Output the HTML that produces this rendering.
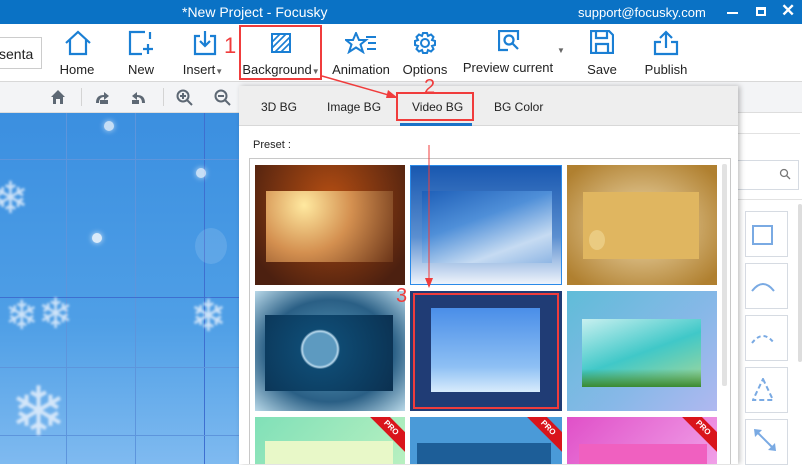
<!DOCTYPE html>
<html><head><style>
*{margin:0;padding:0;box-sizing:border-box}
body{width:802px;height:464px;overflow:hidden;position:relative;font-family:"Liberation Sans",sans-serif;background:#fff}
.a{position:absolute}
.lbl{position:absolute;top:62px;font-size:13px;color:#222;white-space:nowrap;transform:translateX(-50%)}
.ico{position:absolute;top:30px}
.t{position:absolute;font-size:12px;color:#222}
.th{position:absolute;overflow:hidden}
.in{position:absolute}
.pro{position:absolute;right:-14px;top:4px;width:56px;height:14px;background:#d9141b;color:#fff;font-size:8px;font-weight:bold;text-align:center;line-height:14px;transform:rotate(45deg)}
.sb{position:absolute;left:745px;width:43px;height:46px;border:1px solid #d6dbe2;background:#fff}
.sf{position:absolute;filter:blur(1.2px);opacity:.85}
</style></head><body>
<div class="a" style="left:0;top:0;width:802px;height:24px;background:#0a72c5"></div>
<div class="a" style="left:182px;top:4px;color:#fff;font-size:14px">*New Project - Focusky</div>
<div class="a" style="left:578px;top:5px;color:#fff;font-size:13px">support@focusky.com</div>
<div class="a" style="left:727px;top:12px;width:11px;height:2px;background:#fff"></div>
<div class="a" style="left:756px;top:7px;width:10px;height:9px;border:2px solid #fff;border-top-width:3px"></div>
<div class="a" style="left:781px;top:1px;color:#fff;font-size:17px;font-weight:bold">✕</div>
<div class="a" style="left:0;top:24px;width:802px;height:58px;background:#fff;border-bottom:1px solid #d8d8d8"></div>
<div class="a" style="left:-2px;top:37px;width:44px;height:32px;border:1px solid #ccc;font-size:14px;padding:8px 0 0 0;color:#222">senta</div>
<svg class="ico" style="left:64px" width="28" height="26" viewBox="0 0 28 26" fill="none" stroke="#1a7fd4" stroke-width="2.2"><path d="M2 13 L14 2 L26 13 M6 10 V24 H22 V10"/></svg>
<div class="lbl" style="left:77px">Home</div>
<svg class="ico" style="left:128px" width="26" height="26" viewBox="0 0 26 26" fill="none" stroke="#1a7fd4" stroke-width="2.2"><path d="M17 2 H2 V24 H14 M20 14 V24 M15 19 H25 M22 2 V9"/></svg>
<div class="lbl" style="left:141px">New</div>
<svg class="ico" style="left:193px" width="24" height="26" viewBox="0 0 24 26" fill="none" stroke="#1a7fd4" stroke-width="2.2"><path d="M7 6 H2 V24 H22 V6 H17 M12 1 V16 M7 11 L12 16 L17 11"/></svg>
<div class="lbl" style="left:203px">Insert<span style="font-size:8px;color:#666">▼</span></div>
<svg class="ico" style="left:271px;top:33px" width="20" height="20" viewBox="0 0 20 20"><rect x="1" y="1" width="18" height="18" fill="none" stroke="#1a7fd4" stroke-width="2"/><path d="M1 9 L9 1 M1 15 L15 1 M4 19 L19 4 M10 19 L19 10" stroke="#1a7fd4" stroke-width="1.6"/></svg>
<div class="lbl" style="left:281px">Background<span style="font-size:8px;color:#666">▼</span></div>
<svg class="ico" style="left:345px;top:32px" width="32" height="22" viewBox="0 0 32 22" fill="none" stroke="#1a7fd4" stroke-width="2"><path d="M11 1 L14 8 L21 8 L15.5 12.5 L18 20 L11 15.5 L4 20 L6.5 12.5 L1 8 L8 8 Z M21 5 H31 M23 11 H31 M22 17 H31"/></svg>
<div class="lbl" style="left:361px">Animation</div>
<svg class="ico" style="left:413px;top:31px" width="24" height="24" viewBox="0 0 24 24" fill="none" stroke="#1a7fd4" stroke-width="2"><circle cx="12" cy="12" r="4"/><path d="M10 2h4l1 3 3-1.5 2.5 2.5-1.5 3 3 1v4l-3 1 1.5 3-2.5 2.5-3-1.5-1 3h-4l-1-3-3 1.5-2.5-2.5 1.5-3-3-1v-4l3-1-1.5-3 2.5-2.5 3 1.5z"/></svg>
<div class="lbl" style="left:425px">Options</div>
<svg class="ico" style="left:498px" width="22" height="22" viewBox="0 0 22 22" fill="none" stroke="#1a7fd4" stroke-width="2.2"><path d="M20 10 V1 H1 V20 H10"/><circle cx="11" cy="10" r="4.5"/><path d="M14 13 L20 19"/></svg>
<div class="lbl" style="left:508px;top:60px">Preview current</div>
<div class="a" style="left:557px;top:46px;font-size:8px;color:#666">▼</div>
<svg class="ico" style="left:590px" width="24" height="24" viewBox="0 0 24 24" fill="none" stroke="#1a7fd4" stroke-width="2.2"><path d="M1 1 H19 L23 5 V23 H1 Z M6 1 V8 H17 V1 M6 23 V14 H18 V23"/></svg>
<div class="lbl" style="left:602px">Save</div>
<svg class="ico" style="left:653px" width="26" height="26" viewBox="0 0 26 26" fill="none" stroke="#1a7fd4" stroke-width="2.2"><path d="M8 12 H2 V24 H24 V12 H18 M13 2 V18 M7 8 L13 2 L19 8"/></svg>
<div class="lbl" style="left:666px">Publish</div>
<div class="a" style="left:0;top:82px;width:802px;height:31px;background:#f3f4f6;border-bottom:1px solid #ddd"></div>
<svg class="a" style="left:50px;top:89px" width="16" height="16" viewBox="0 0 16 16"><path d="M1 8 L8 1 L15 8 H13 V15 H10 V10 H6 V15 H3 V8 Z" fill="#5d6874"/></svg>
<div class="a" style="left:81px;top:88px;width:1px;height:18px;background:#d4d4d4"></div>
<svg class="a" style="left:94px;top:89px" width="16" height="16" viewBox="0 0 16 16"><path d="M2 14 C2 8 5 6 10 6 V3 L15 7 L10 11 V8 C7 8 5 10 5 14Z" fill="#5d6874"/><rect x="6" y="11" width="8" height="4" fill="#5d6874"/></svg>
<svg class="a" style="left:131px;top:89px" width="16" height="16" viewBox="0 0 16 16"><path d="M14 14 C14 8 11 6 6 6 V3 L1 7 L6 11 V8 C9 8 11 10 11 14Z" fill="#5d6874"/><rect x="1" y="11" width="7" height="4" fill="#5d6874"/></svg>
<div class="a" style="left:163px;top:88px;width:1px;height:18px;background:#d4d4d4"></div>
<svg class="a" style="left:176px;top:89px" width="17" height="17" viewBox="0 0 17 17" fill="none" stroke="#5d6874" stroke-width="2"><circle cx="7" cy="7" r="5.5"/><path d="M11 11 L16 16 M4 7 H10 M7 4 V10"/></svg>
<svg class="a" style="left:214px;top:89px" width="17" height="17" viewBox="0 0 17 17" fill="none" stroke="#5d6874" stroke-width="2"><circle cx="7" cy="7" r="5.5"/><path d="M11 11 L16 16 M4 7 H10"/></svg>
<div class="a" style="left:0;top:113px;width:240px;height:351px;background:linear-gradient(180deg,#3b8fe0 0%,#4f9fe6 60%,#7fbaf0 100%);overflow:hidden">
<div class="a" style="left:66px;top:0;width:1px;height:351px;background:#5d95dc"></div>
<div class="a" style="left:135px;top:0;width:1px;height:351px;background:#5d95dc"></div>
<div class="a" style="left:204px;top:0;width:1px;height:351px;background:#3e6fd0"></div>
<div class="a" style="left:0;top:46px;width:240px;height:1px;background:#5d95dc"></div>
<div class="a" style="left:0;top:184px;width:240px;height:1px;background:#3e6fd0"></div>
<div class="a" style="left:0;top:254px;width:240px;height:1px;background:#5d95dc"></div>
<div class="a" style="left:0;top:322px;width:240px;height:1px;background:#5d95dc"></div>
<div class="sf" style="left:-8px;top:60px;color:#e6f0fc;font-size:44px">❄</div>
<div class="sf" style="left:5px;top:180px;color:#e6f0fc;font-size:40px">❄</div>
<div class="sf" style="left:38px;top:176px;color:#e6f0fc;font-size:42px">❄</div>
<div class="sf" style="left:190px;top:178px;color:#e6f0fc;font-size:44px">❄</div>
<div class="sf" style="left:10px;top:260px;color:#e6f0fc;font-size:68px">❄</div>
<div class="a" style="left:92px;top:120px;width:10px;height:10px;border-radius:50%;background:#fff;opacity:.8;box-shadow:0 0 6px #fff"></div>
<div class="a" style="left:104px;top:8px;width:10px;height:10px;border-radius:50%;background:#fff;opacity:.7;box-shadow:0 0 6px #fff"></div>
<div class="a" style="left:196px;top:55px;width:10px;height:10px;border-radius:50%;background:#fff;opacity:.7;box-shadow:0 0 6px #fff"></div>
<div class="a" style="left:195px;top:115px;width:32px;height:36px;border-radius:50%;background:#fff;opacity:.12"></div>
</div>
<div class="a" style="left:738px;top:113px;width:64px;height:351px;background:#fff"></div>
<div class="a" style="left:738px;top:133px;width:62px;height:1px;background:#e2e2e2"></div>
<div class="a" style="left:736px;top:160px;width:63px;height:30px;border:1px solid #d6dbe2"></div>
<svg class="a" style="left:779px;top:168px" width="12" height="12" viewBox="0 0 12 12" fill="none" stroke="#777" stroke-width="1.3"><circle cx="5" cy="5" r="3.5"/><path d="M7.5 7.5 L11 11"/></svg>
<div class="a" style="left:736px;top:199px;width:66px;height:1px;background:#e2e2e2"></div>
<div class="a" style="left:798px;top:204px;width:4px;height:158px;background:#ddd;border-radius:2px"></div>
<div class="sb" style="top:211px"><div class="a" style="left:6px;top:13px;width:21px;height:20px;border:2px solid #7aaae3"></div></div>
<div class="sb" style="top:263px"><svg class="a" style="left:5px;top:16px" width="24" height="12"><path d="M1 11 Q12 -3 23 11" fill="none" stroke="#7aaae3" stroke-width="2"/></svg></div>
<div class="sb" style="top:315px"><svg class="a" style="left:5px;top:16px" width="24" height="12"><path d="M1 11 Q12 -3 23 11" fill="none" stroke="#7aaae3" stroke-width="2" stroke-dasharray="4 3"/></svg></div>
<div class="sb" style="top:367px"><svg class="a" style="left:6px;top:10px" width="24" height="24"><path d="M11 1 L21 22 H1 Z" fill="none" stroke="#7aaae3" stroke-width="2" stroke-dasharray="5 3"/></svg></div>
<div class="sb" style="top:419px"><svg class="a" style="left:7px;top:8px" width="24" height="24"><path d="M3 3 L21 21" stroke="#7aaae3" stroke-width="2"/><path d="M1 1 L9 2 L2 9Z M23 23 L15 22 L22 15Z" fill="#7aaae3"/></svg></div>
<div class="a" style="left:239px;top:86px;width:499px;height:378px;background:#fff;box-shadow:2px 0 5px rgba(0,0,0,.25)"></div>
<div class="a" style="left:239px;top:86px;width:499px;height:40px;background:#eeeeee;border-bottom:1px solid #d8d8d8"></div>
<div class="t" style="left:261px;top:100px">3D BG</div>
<div class="t" style="left:327px;top:100px">Image BG</div>
<div class="t" style="left:412px;top:100px">Video BG</div>
<div class="t" style="left:494px;top:100px">BG Color</div>
<div class="a" style="left:400px;top:123px;width:72px;height:3px;background:#1a72c8"></div>
<div class="a" style="left:253px;top:139px;font-size:11px;color:#222">Preset :</div>
<div class="a" style="left:249px;top:158px;width:482px;height:306px;border:1px solid #c8c8c8;border-bottom:none"></div>
<div class="a" style="left:722px;top:164px;width:5px;height:222px;background:#e2e2e2;border-radius:2px"></div>
<div class="th" style="left:255px;top:165px;width:150px;height:120px;background:radial-gradient(ellipse at 50% 30%,#b54e12,#4c2010 85%)"><div class="in" style="left:11px;top:26px;width:127px;height:71px;background:radial-gradient(circle at 30% 20%,#ffe9a0,#d49050 45%,#6a3418 100%)"></div></div>
<div class="th" style="left:410px;top:165px;width:152px;height:120px;background:linear-gradient(180deg,#1958b0,#5b8fd0 60%,#eef3fb);border:1px solid #2a8ae8"><div class="in" style="left:11px;top:25px;width:130px;height:72px;background:linear-gradient(160deg,#1e5fb8,#4f8fd8 40%,#c6dbf2 75%,#8fb6e4)"></div></div>
<div class="th" style="left:567px;top:165px;width:150px;height:120px;background:radial-gradient(ellipse,#f0dcb0,#b08030 90%)"><div class="in" style="left:16px;top:27px;width:116px;height:67px;background:#e0b660"><div class="a" style="left:6px;top:38px;width:16px;height:20px;border-radius:50%;background:#f0d898;opacity:.6"></div></div></div>
<div class="th" style="left:255px;top:291px;width:150px;height:120px;background:radial-gradient(ellipse,#5ea0c0,#2a5f85 60%,#b8d8e8)"><div class="in" style="left:10px;top:24px;width:128px;height:76px;background:radial-gradient(circle at 43% 45%,#5d9ac0 16px,#b8d8ec 18px,#0e4a72 20px,#0b3050)"></div></div>
<div class="th" style="left:410px;top:291px;width:152px;height:120px;background:#203c75"><div class="in" style="left:21px;top:17px;width:109px;height:84px;background:linear-gradient(180deg,#4a8ee8,#8ec0f4 70%,#d8ebfc)"></div></div>
<div class="th" style="left:567px;top:291px;width:150px;height:120px;background:linear-gradient(135deg,#60bcd8,#88b8e8 60%,#b0b8f0)"><div class="in" style="left:15px;top:28px;width:119px;height:68px;background:linear-gradient(160deg,#c8f0f0,#40c8c8 50%,#a8d898 100%)"><div class="a" style="left:0;top:50px;width:119px;height:18px;background:linear-gradient(0deg,#3a8a30,transparent)"></div></div></div>
<div class="th" style="left:255px;top:417px;width:150px;height:47px;background:linear-gradient(135deg,#80e0b8,#b8f0c0);"><div class="in" style="left:10px;top:24px;width:128px;height:30px;background:#e8f8c8"></div><div class="pro">PRO</div></div>
<div class="th" style="left:410px;top:417px;width:152px;height:47px;background:#4a9ad8"><div class="in" style="left:7px;top:26px;width:134px;height:30px;background:#1d5e98"></div><div class="pro">PRO</div></div>
<div class="th" style="left:567px;top:417px;width:150px;height:47px;background:linear-gradient(135deg,#e050c8,#f0a0e8)"><div class="in" style="left:12px;top:27px;width:128px;height:30px;background:#f060c0"></div><div class="pro">PRO</div></div>
<div class="a" style="left:239px;top:25px;width:83px;height:55px;border:2px solid #f03c3c"></div>
<div class="a" style="left:224px;top:33px;color:#f03c3c;font-size:22px">1</div>
<div class="a" style="left:396px;top:92px;width:78px;height:29px;border:2px solid #f03c3c"></div>
<div class="a" style="left:424px;top:77px;color:#f03c3c;font-size:20px;line-height:20px">2</div>
<div class="a" style="left:413px;top:293px;width:146px;height:116px;border:2px solid #f03c3c"></div>
<div class="a" style="left:396px;top:285px;color:#f03c3c;font-size:20px">3</div>
<svg class="a" style="left:0;top:0" width="802" height="464"><path d="M322 76 L392 96" stroke="#f03c3c" stroke-width="1.5"/><path d="M398 98 L388 90 L386 98Z" fill="#f03c3c"/><path d="M429 145 L429 280" stroke="#f03c3c" stroke-width="1"/><path d="M429 288 L425 278 L433 278Z" fill="#f03c3c"/></svg>
</body></html>
